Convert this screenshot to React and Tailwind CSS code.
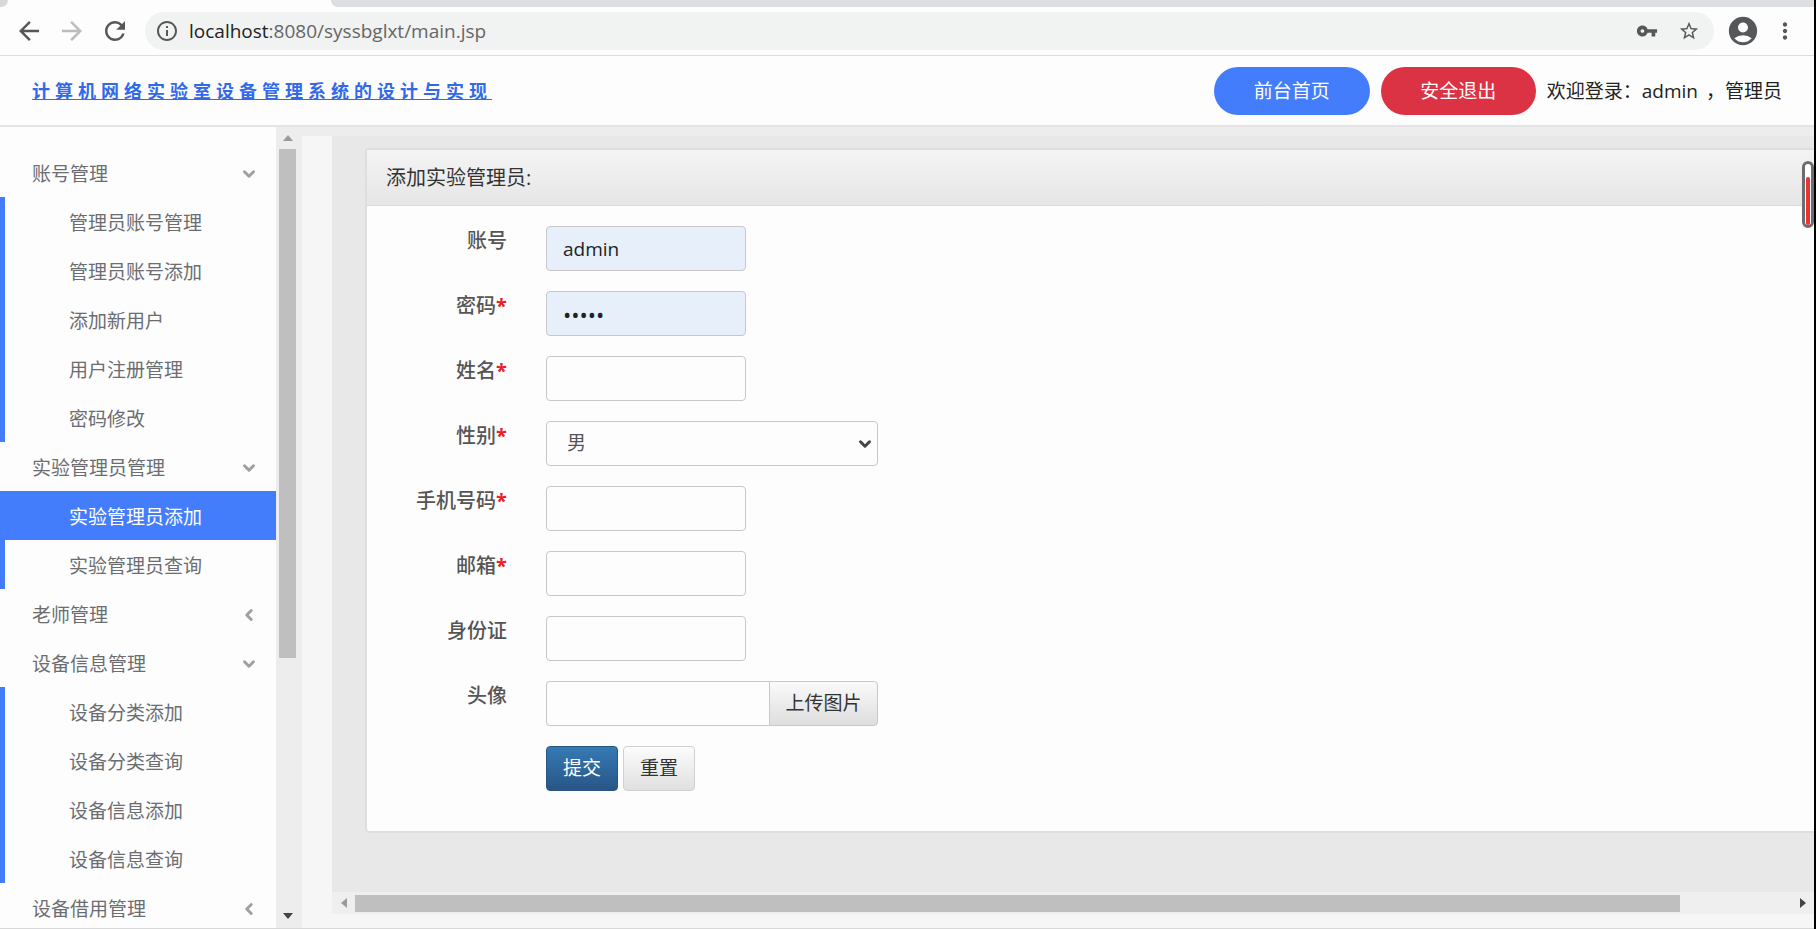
import { useState } from "react";
import {
  MdArrowBack,
  MdArrowForward,
  MdRefresh,
  MdInfoOutline,
  MdVpnKey,
  MdStarBorder,
  MdAccountCircle,
  MdMoreVert,
} from "react-icons/md";
import { ChevronDown, ChevronLeft } from "lucide-react";

const menus = [
  {
    name: "账号管理",
    children: ["管理员账号管理", "管理员账号添加", "添加新用户", "用户注册管理", "密码修改"],
  },
  { name: "实验管理员管理", children: ["实验管理员添加", "实验管理员查询"] },
  { name: "老师管理", children: [] },
  {
    name: "设备信息管理",
    children: ["设备分类添加", "设备分类查询", "设备信息添加", "设备信息查询"],
  },
  { name: "设备借用管理", children: [] },
];

const inputStyle =
  "h-[45px] rounded-[4px] border border-[#c8c8c8] px-4 text-[#222] outline-none";

function BrowserBar() {
  return (
    <div className="shrink-0 border-b border-[#dcdde0] bg-[#fdfdfd]">
      <div className="flex h-[7px] justify-between">
        <div className="w-2 rounded-br-lg bg-[#d5dad9]" />
        <div className="ml-[323px] flex-1 rounded-bl-lg bg-[#dcdee2]" />
      </div>
      <div className="flex h-12 items-center text-[#55585b]">
        <div className="flex w-[145px] shrink-0 items-center gap-[13px] pl-[14px]">
          <button type="button" aria-label="后退"><MdArrowBack size={30} /></button>
          <button type="button" aria-label="前进" className="text-[#bcbcbc]"><MdArrowForward size={30} /></button>
          <button type="button" aria-label="刷新"><MdRefresh size={30} /></button>
        </div>
        <div className="flex h-[38px] flex-1 items-center rounded-full bg-[#f1f2f2] pl-[10px] pr-[14px]">
          <MdInfoOutline size={24} className="shrink-0" />
          <p className="flex-1 pl-[10px] text-[19px] text-[#666]">
            <span className="text-[#222]">localhost</span>:8080/syssbglxt/main.jsp
          </p>
          <div className="flex items-center gap-5">
            <MdVpnKey size={22} />
            <MdStarBorder size={22} />
          </div>
        </div>
        <div className="flex items-center gap-3 pl-3 pr-4">
          <MdAccountCircle size={34} />
          <MdMoreVert size={26} />
        </div>
      </div>
    </div>
  );
}

function Header() {
  return (
    <header className="flex h-[71px] shrink-0 items-center justify-between border-b-2 border-[#e4e4e4] bg-[#fdfdfd] px-8">
      <a href="#" className="pt-[2px] text-[18px] font-bold tracking-[5px] text-[#3269ea] underline underline-offset-1">
        计算机网络实验室设备管理系统的设计与实现
      </a>
      <div className="flex items-center gap-[11px] text-[19px] text-[#222]">
        <button type="button" className="h-12 w-[156px] rounded-full bg-[#447dfc] pt-[2px] text-white">前台首页</button>
        <button type="button" className="h-12 w-[155px] rounded-full bg-[#db3244] pt-[2px] text-white">安全退出</button>
        <p className="flex gap-2 pt-[2px]">
          <span>欢迎登录：admin</span>
          <span>，管理员</span>
        </p>
      </div>
    </header>
  );
}

function Sidebar({ active, onSelect }) {
  return (
    <nav className="w-[276px] shrink-0 overflow-hidden bg-[#fdfdfe] pt-[21px] text-[19px] text-[#6b6d70]">
      {menus.map((menu) => (
        <div key={menu.name}>
          <button type="button" className="flex h-[49px] w-full items-center justify-between pt-[3px] pl-8 pr-[18px]">
            {menu.name}
            {menu.children.length > 0 ? (
              <ChevronDown size={18} strokeWidth={4} className="text-[#a0a0a0]" />
            ) : (
              <ChevronLeft size={18} strokeWidth={4} className="text-[#a0a0a0]" />
            )}
          </button>
          {menu.children.length > 0 && (
            <ul className="border-l-[5px] border-[#447dfc]">
              {menu.children.map((item) => (
                <li key={item}>
                  <a
                    href="#"
                    onClick={() => onSelect(item)}
                    className={
                      item === active
                        ? "flex h-[49px] items-center bg-[#447dfc] pt-[3px] pl-16 text-white"
                        : "flex h-[49px] items-center pt-[3px] pl-16"
                    }
                  >
                    {item}
                  </a>
                </li>
              ))}
            </ul>
          )}
        </div>
      ))}
    </nav>
  );
}

function SidebarScroll() {
  return (
    <div className="flex w-[26px] shrink-0 flex-col bg-[#ededed] pl-[3px]">
      <div className="flex h-[22px] w-[17px] items-center justify-center">
        <svg width="10" height="6" viewBox="0 0 10 6"><path d="M5 0l5 6H0z" fill="#9a9a9a" /></svg>
      </div>
      <div className="w-[17px] flex-[510] bg-[#bfbfbf]" />
      <div className="flex-[246]" />
      <div className="flex h-6 w-[17px] items-center justify-center">
        <svg width="10" height="6" viewBox="0 0 10 6"><path d="M5 6L0 0h10z" fill="#444" /></svg>
      </div>
    </div>
  );
}

function Field({ id, label, required, children }) {
  return (
    <div className="flex items-start">
      <label htmlFor={id} className="w-[140px] shrink-0 text-right text-[20px] leading-[30px] font-medium text-[#555]">
        {label}
        {required && <span className="font-bold text-[#e8202c]">*</span>}
      </label>
      <div className="flex pl-[39px]">{children}</div>
    </div>
  );
}

function AdminForm() {
  const [account, setAccount] = useState("admin");
  const [password, setPassword] = useState("admin");

  return (
    <form className="flex flex-col gap-5 pt-5 pb-10" onSubmit={(e) => e.preventDefault()}>
      <Field id="account" label="账号">
        <input id="account" value={account} onChange={(e) => setAccount(e.target.value)} className={inputStyle + " w-[200px] bg-[#e7effa] text-[19px]"} />
      </Field>
      <Field id="password" label="密码" required>
        <input id="password" type="password" value={password} onChange={(e) => setPassword(e.target.value)} className={inputStyle + " w-[200px] bg-[#e7effa] text-[22px]"} />
      </Field>
      <Field id="name" label="姓名" required>
        <input id="name" className={inputStyle + " w-[200px] text-[19px]"} />
      </Field>
      <Field id="gender" label="性别" required>
        <div className="relative">
          <select id="gender" className="h-[45px] w-[332px] appearance-none rounded-[4px] border border-[#c8c8c8] bg-transparent px-5 text-[19px] text-[#555] outline-none">
            <option>男</option>
            <option>女</option>
          </select>
          <ChevronDown size={18} strokeWidth={4} className="pointer-events-none absolute top-[14px] right-1 text-[#444]" />
        </div>
      </Field>
      <Field id="phone" label="手机号码" required>
        <input id="phone" className={inputStyle + " w-[200px] text-[19px]"} />
      </Field>
      <Field id="email" label="邮箱" required>
        <input id="email" className={inputStyle + " w-[200px] text-[19px]"} />
      </Field>
      <Field id="idcard" label="身份证">
        <input id="idcard" className={inputStyle + " w-[200px] text-[19px]"} />
      </Field>
      <Field id="avatar" label="头像">
        <input id="avatar" className={inputStyle + " w-[223px] rounded-r-none border-r-0 text-[19px]"} />
        <button type="button" className="h-[45px] w-[109px] rounded-r-[4px] border border-[#c8c8c8] bg-linear-to-b from-[#fafafa] to-[#dedede] text-[19px] text-[#333]">
          上传图片
        </button>
      </Field>
      <div className="flex gap-[5px] pl-[179px] text-[19px]">
        <button type="submit" className="h-[45px] w-[72px] rounded-[4px] border border-[#2a5580] bg-linear-to-b from-[#347ab5] to-[#285686] text-white">
          提交
        </button>
        <button type="reset" className="h-[45px] w-[72px] rounded-[4px] border border-[#d0d0d0] bg-linear-to-b from-[#fcfcfc] to-[#e0e0e0] text-[#333]">
          重置
        </button>
      </div>
    </form>
  );
}

function BottomScroll() {
  return (
    <div className="flex h-[22px] items-center bg-[#efefef]">
      <div className="flex w-[23px] justify-center">
        <svg width="6" height="10" viewBox="0 0 6 10"><path d="M0 5l6-5v10z" fill="#9a9a9a" /></svg>
      </div>
      <div className="h-[17px] flex-[1325] bg-[#bfbfbf]" />
      <div className="flex-[112]" />
      <div className="flex w-[22px] justify-center">
        <svg width="6" height="10" viewBox="0 0 6 10"><path d="M6 5L0 0v10z" fill="#444" /></svg>
      </div>
    </div>
  );
}

export default function App() {
  const [active, setActive] = useState("实验管理员添加");

  return (
    <div className="relative flex h-screen flex-col overflow-hidden border-r-2 border-black bg-[#f6f6f7] font-['Open_Sans','Noto_Sans_CJK_SC',sans-serif]">
      <BrowserBar />
      <Header />
      <div className="flex min-h-0 flex-1 border-b border-[#d8d8d8]">
        <Sidebar active={active} onSelect={setActive} />
        <SidebarScroll />
        <main className="flex min-w-0 flex-1 flex-col border-t-[9px] border-[#ededed] pb-[14px] pl-[30px]">
          <div className="flex-1 bg-[#e8e8e8] pt-3 pl-[33px]">
            <section className="rounded-l-[4px] border-2 border-r-0 border-[#dedede] bg-[#fdfdfd]">
              <h3 className="flex h-14 items-center border-b border-[#dadada] bg-linear-to-b from-[#f4f4f4] to-[#e6e6e6] pl-[19px] text-[20px] text-[#333]">
                添加实验管理员:
              </h3>
              <AdminForm />
            </section>
          </div>
          <BottomScroll />
        </main>
      </div>
      {/* level indicator over the right edge */}
      <div className="absolute top-[161px] right-0 flex h-[67px] w-3 items-end justify-center rounded-full border-[3px] border-[#6d6d6d] bg-white">
        <div className="h-12 w-1 rounded-full bg-[#e83434]" />
      </div>
    </div>
  );
}
